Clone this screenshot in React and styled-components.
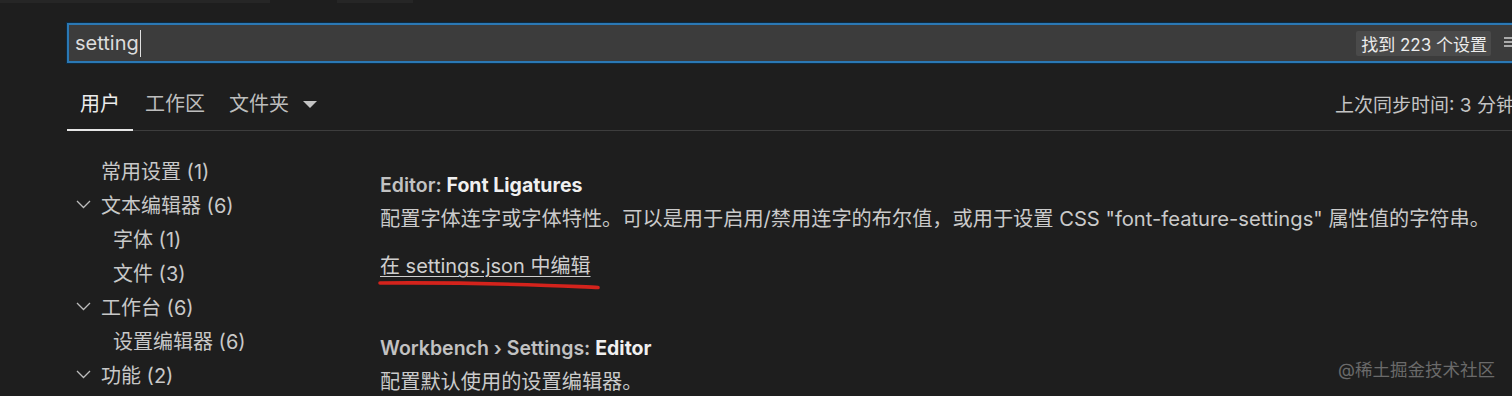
import React from 'react';
import styled, { createGlobalStyle } from 'styled-components';

const GlobalStyle = createGlobalStyle`
  html, body {
    margin: 0;
    background: #1e1e1e;
  }
  body {
    font-family: Inter, "Noto Sans CJK SC", sans-serif;
    color: #cccccc;
  }
`;

const tree = [
  { label: '常用设置 (1)', depth: 0 },
  { label: '文本编辑器 (6)', depth: 0, open: true },
  { label: '字体 (1)', depth: 1 },
  { label: '文件 (3)', depth: 1 },
  { label: '工作台 (6)', depth: 0, open: true },
  { label: '设置编辑器 (6)', depth: 1 },
  { label: '功能 (2)', depth: 0, open: true },
];

const tabs = ['用户', '工作区', '文件夹'];

function Chevron() {
  return (
    <svg width="15" height="9" viewBox="0 0 15 9">
      <polyline points="1,1 7.5,7.5 14,1" fill="none" stroke="#bcbcbc" strokeWidth="1.3" />
    </svg>
  );
}

function FilterIcon() {
  return (
    <svg width="16" height="16" viewBox="0 0 16 16">
      <path d="M1 3h14M1 7h14M1 11h14" stroke="#d0d0d0" strokeWidth="1.4" />
    </svg>
  );
}

export default function App() {
  return (
    <Page>
      <GlobalStyle />
      <TopStrip>
        <StripSeg $w={270} />
        <StripGap $w={67} />
        <StripSeg $w={76} />
      </TopStrip>

      <SearchRow>
        <SearchBox>
          <Query>
            setting
            <Caret />
          </Query>
          <Badge>找到 223 个设置</Badge>
          <FilterIcon />
        </SearchBox>
      </SearchRow>

      <TabBar>
        {tabs.map((t, i) => (
          <Tab key={t} $active={i === 0} $first={i === 0}>
            {t}
          </Tab>
        ))}
        <DropArrow>
          <svg width="14" height="7" viewBox="0 0 14 7">
            <path d="M0 0h14L7 7z" fill="#c4c4c4" />
          </svg>
        </DropArrow>
        <SyncInfo>上次同步时间: 3 分钟前</SyncInfo>
      </TabBar>

      <Body>
        <Sidebar>
          {tree.map((item) => (
            <TreeRow key={item.label} $depth={item.depth}>
              <Twisty>{item.open && <Chevron />}</Twisty>
              {item.label}
            </TreeRow>
          ))}
        </Sidebar>

        <Content>
          <Setting>
            <Title>
              <Category>Editor: </Category>
              <Name>Font Ligatures</Name>
            </Title>
            <Desc>
              配置字体连字或字体特性。可以是用于启用/禁用连字的布尔值，或用于设置 CSS "font-feature-settings" 属性值的字符串。
            </Desc>
            <LinkWrap>
              <EditLink>在 settings.json 中编辑</EditLink>
              <Marker width="226" height="12" viewBox="0 0 226 12">
                <path
                  d="M3 3 C 60 2.5, 130 4, 170 5.5 S 215 7, 221 7.5"
                  fill="none"
                  stroke="#d4231c"
                  strokeWidth="3.6"
                  strokeLinecap="round"
                />
              </Marker>
            </LinkWrap>
          </Setting>

          <Setting $gap={48}>
            <Title>
              <Category>Workbench › Settings: </Category>
              <Name>Editor</Name>
            </Title>
            <Desc>配置默认使用的设置编辑器。</Desc>
          </Setting>
        </Content>
      </Body>

      <Watermark>@稀土掘金技术社区</Watermark>
    </Page>
  );
}

const Page = styled.div`
  position: relative;
  width: 1512px;
  height: 396px;
  overflow: hidden;
  background: #1e1e1e;
`;

const TopStrip = styled.div`
  display: flex;
  height: 3px;
`;

const StripSeg = styled.div`
  width: ${(p) => p.$w}px;
  background: #262626;
`;

const StripGap = styled.div`
  width: ${(p) => p.$w}px;
`;

const SearchRow = styled.div`
  display: flex;
  padding-left: 67px;
  margin-top: 20px;
`;

const SearchBox = styled.div`
  flex: 0 0 1460px;
  box-sizing: border-box;
  height: 40px;
  display: flex;
  align-items: center;
  gap: 12px;
  padding: 0 6px 0 6px;
  background: #3c3c3c;
  border: 2px solid #2b78b4;
  box-shadow: 0 0 0 1px #0d2a40;
`;

const Query = styled.div`
  flex: 1;
  display: flex;
  align-items: center;
  font-size: 20px;
  color: #dcdcdc;
`;

const Caret = styled.span`
  display: inline-block;
  width: 1px;
  height: 27px;
  margin-left: 1px;
  background: #e0e0e0;
`;

const Badge = styled.div`
  height: 25px;
  display: flex;
  align-items: center;
  padding: 0 4px 0 5px;
  background: #4a4a4a;
  border-radius: 2px;
  font-size: 17px;
  color: #ececec;
  white-space: nowrap;
`;

const TabBar = styled.div`
  display: flex;
  align-items: stretch;
  margin-left: 67px;
  margin-top: 22px;
  height: 45px;
  border-bottom: 1px solid #3d3d3d;
`;

const Tab = styled.div`
  box-sizing: border-box;
  display: flex;
  align-items: center;
  padding: 0 ${(p) => (p.$first ? 13 : 12)}px 9px;
  font-size: 20px;
  color: ${(p) => (p.$active ? '#ececec' : '#bdbdbd')};
  border-bottom: 2px solid ${(p) => (p.$active ? '#e6e6e6' : 'transparent')};
  margin-bottom: -1px;
`;

const DropArrow = styled.div`
  display: flex;
  align-items: center;
  margin-left: 2px;
  padding-bottom: 6px;
`;

const SyncInfo = styled.div`
  flex: 0 0 auto;
  display: flex;
  align-items: center;
  width: 177px;
  margin-left: auto;
  padding-bottom: 9px;
  white-space: nowrap;
  font-size: 19px;
  color: #c4c4c4;
`;

const Body = styled.div`
  display: flex;
`;

const Sidebar = styled.div`
  flex: 0 0 380px;
  padding-top: 22px;
`;

const TreeRow = styled.div`
  display: flex;
  align-items: center;
  height: 34px;
  padding-left: ${(p) => 67 + p.$depth * 12}px;
  font-size: 20px;
  color: #c8c8c8;
  white-space: nowrap;
`;

const Twisty = styled.div`
  width: 34px;
  flex: 0 0 34px;
  display: flex;
  justify-content: center;
  padding-right: 2px;
  box-sizing: border-box;
`;

const Content = styled.div`
  flex: 1;
  padding-top: 38px;
  white-space: nowrap;
`;

const Setting = styled.div`
  margin-top: ${(p) => p.$gap || 0}px;
`;

const Title = styled.div`
  line-height: 33px;
  font-size: 19.5px;
`;

const Category = styled.span`
  font-weight: 600;
  color: #c2c2c2;
`;

const Name = styled.span`
  font-weight: 700;
  color: #f0f0f0;
`;

const Desc = styled.div`
  line-height: 33px;
  font-size: 20.2px;
  color: #cacaca;
`;

const LinkWrap = styled.div`
  position: relative;
  margin-top: 15px;
  line-height: 33px;
`;

const EditLink = styled.span`
  font-size: 20px;
  color: #cfcfcf;
  text-decoration: underline;
  text-underline-offset: 3px;
  text-decoration-thickness: 1px;
`;

const Marker = styled.svg`
  position: absolute;
  left: -3px;
  top: 30px;
`;

const Watermark = styled.div`
  position: absolute;
  right: 17px;
  bottom: 15px;
  font-size: 17.5px;
  color: #6a6a6a;
`;
